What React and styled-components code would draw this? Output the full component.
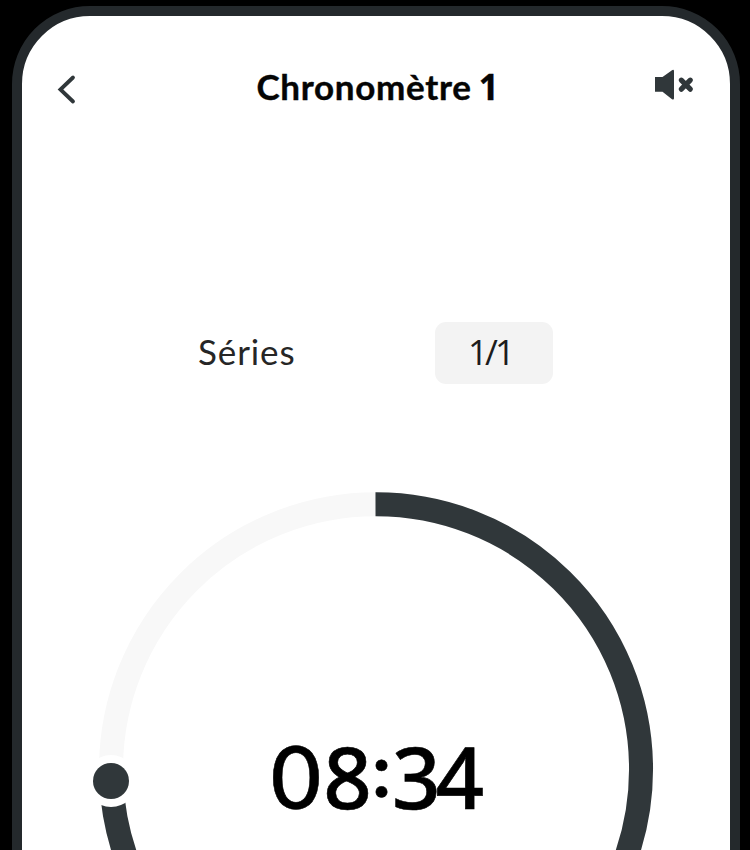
import React from "react";
import styled, { createGlobalStyle } from "styled-components";

const GlobalStyle = createGlobalStyle`
  *, *::before, *::after { box-sizing: border-box; }
  body { margin: 0; background: #000; overflow: hidden; }
`;

const Stage = styled.main`
  height: 850px;
  width: 750px;
  padding: 6px 10px 0 12px;
  overflow: hidden;
  background: #000;
  font-family: Lato, "Open Sans", sans-serif;
`;

const Phone = styled.section`
  height: 1400px;
  border: 10px solid #24292c;
  border-radius: 78px;
  background: #fff;
`;

const Header = styled.header`
  display: grid;
  grid-template-columns: 60px 1fr 60px;
  align-items: start;
  height: 306px;
  padding: 50px 35px 0 30px;
`;

const IconButton = styled.button`
  display: flex;
  justify-content: ${({ $end }) => ($end ? "flex-end" : "flex-start")};
  padding: 0;
  border: 0;
  background: none;
  color: #30373a;
`;

const Title = styled.h1`
  margin: -1px 0 0;
  padding-left: 9px;
  text-align: center;
  white-space: nowrap;
  font-size: 35px;
  line-height: 42px;
  font-weight: 700;
  letter-spacing: 0.7px;
  color: #050505;
  -webkit-text-stroke: 0.4px #050505;
`;

const Figure = styled.span`
  margin-left: -2px;
  font-family: "Open Sans", sans-serif;
`;

const SeriesRow = styled.div`
  display: flex;
  align-items: center;
  justify-content: space-between;
  width: 355px;
  height: 62px;
  margin-left: 176px;
`;

const Label = styled.span`
  padding-bottom: 4px;
  font-size: 35px;
  letter-spacing: 0.9px;
  color: #262626;
`;

const Count = styled.span`
  display: flex;
  align-items: center;
  justify-content: center;
  width: 118px;
  height: 62px;
  padding: 0 8px 4px 0;
  border-radius: 11px;
  background: #f3f3f3;
  color: #1c1c1c;
  font: 400 35px "Open Sans", sans-serif;
  letter-spacing: -3px;
`;

const Dial = styled.div`
  display: grid;
  width: 580px;
  height: 580px;
  margin: 95px 0 0 64px;
  > * { grid-area: 1 / 1; }
`;

const Time = styled.time`
  display: flex;
  align-items: baseline;
  align-self: center;
  justify-self: center;
  padding: 13px 2px 0 0;
  font: 500 85px/100px "Noto Sans", sans-serif;
  letter-spacing: -5px;
  color: #000;
  -webkit-text-stroke: 0.6px #000;
`;

const RoundDigit = styled.span`
  margin-right: 2px;
  font-size: 87px;
  font-family: Lato, sans-serif;
  letter-spacing: 0;
`;

const Colon = styled.span`
  margin: 0 1px 0 5px;
  transform: translateY(-12px);
  font: 700 74px/80px Lato, sans-serif;
  letter-spacing: 0;
`;

function BackIcon() {
  return (
    <svg width="26" height="42" viewBox="0 0 26 42" fill="none">
      <path d="M21 11.5 8.4 23.5 21 35.5" stroke="currentColor" strokeWidth="3.8" strokeLinecap="round" />
    </svg>
  );
}

function MutedIcon() {
  return (
    <svg width="46" height="40" viewBox="0 0 46 40">
      <path d="M6 11h7.5L23 4.2q2-1 2 1v27q0 2-2 1l-9.5-7.5H6Z" fill="currentColor" />
      <path d="m32.3 14.2 9 9m0-9-9 9" fill="none" stroke="currentColor" strokeWidth="5.2" strokeLinecap="round" />
    </svg>
  );
}

function ProgressRing() {
  return (
    <svg width="580" height="580" viewBox="86 479 580 580" fill="none">
      <circle cx="376" cy="769.3" r="265" stroke="#f8f8f8" strokeWidth="24" />
      <path d="M375.5 504.3A265 265 0 1 1 111.3 781" stroke="#30373a" strokeWidth="24" />
      <circle cx="111" cy="781" r="26" fill="#fff" />
      <circle cx="111" cy="781" r="18" fill="#30373a" />
    </svg>
  );
}

export default function App() {
  return (
    <Stage>
      <GlobalStyle />
      <Phone>
        <Header>
          <IconButton aria-label="Retour"><BackIcon /></IconButton>
          <Title>Chronomètre <Figure>1</Figure></Title>
          <IconButton $end aria-label="Activer le son"><MutedIcon /></IconButton>
        </Header>
        <SeriesRow>
          <Label>Séries</Label>
          <Count>1/1</Count>
        </SeriesRow>
        <Dial>
          <ProgressRing />
          <Time><RoundDigit>0</RoundDigit>8<Colon>:</Colon>34</Time>
        </Dial>
      </Phone>
    </Stage>
  );
}
